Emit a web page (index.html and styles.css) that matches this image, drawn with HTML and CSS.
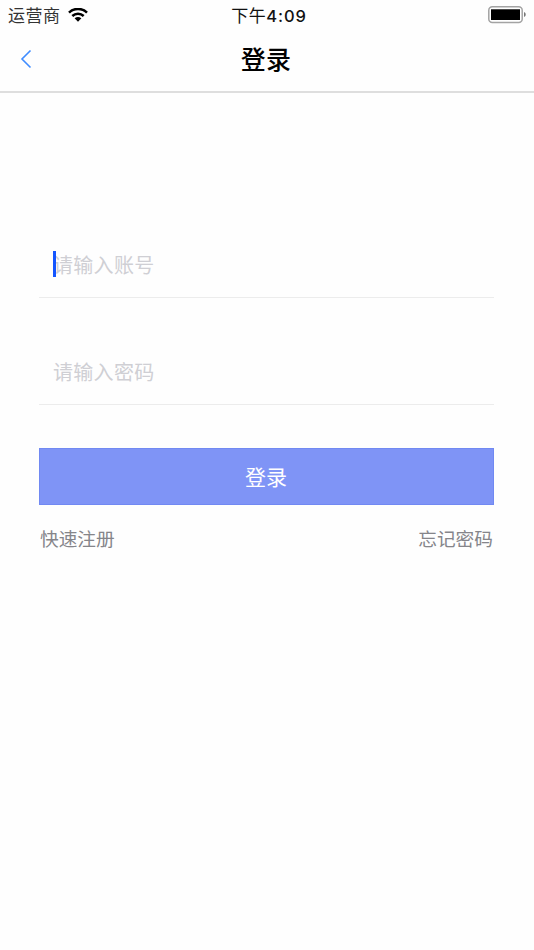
FILE: index.html
```html
<!DOCTYPE html>
<html lang="zh-CN">
<head>
<meta charset="utf-8">
<title>登录</title>
<link rel="stylesheet" href="styles.css">
</head>
<body>
<header class="header">
  <div class="status">
    <div class="carrier">
      <span>运营商</span>
      <svg class="wifi" width="20" height="14" viewBox="0 0 20 14">
        <path d="M1 4.6C6-.3 14-.3 19 4.6M4.3 8C7.5 5 12.500 5 15.700 8" fill="none" stroke="#000" stroke-width="2.500"/>
        <path d="M6.600 10.300Q10 7.600 13.400 10.300L10 13.700Z" fill="#000"/>
      </svg>
    </div>
    <time class="time">下午<span class="digits">4:09</span></time>
    <svg class="battery" width="38" height="18" viewBox="0 0 38 18">
      <rect x=".8" y=".8" width="33.400" height="15.600" rx="3.500" fill="#fff" stroke="#a3a3a3" stroke-width="1.500"/>
      <rect x="3" y="3.300" width="29" height="10.700" fill="#000"/>
      <path d="M36 6C38.300 6.800 38.300 10.200 36 11Z" fill="#777"/>
    </svg>
  </div>
  <nav class="nav">
    <a class="back" href="#" aria-label="返回">
      <svg width="12" height="20" viewBox="0 0 12 20"><path d="M10.500 1.500L2 10L10.500 18.500" fill="none" stroke="#3f8cff" stroke-width="1.600"/></svg>
    </a>
    <h1 class="title">登录</h1>
    <span></span>
  </nav>
</header>
<main class="login">
  <div class="field"><span class="caret"></span><span>请输入账号</span></div>
  <div class="field"><span>请输入密码</span></div>
  <button class="submit" type="button">登录</button>
  <div class="links"><a href="#">快速注册</a><a href="#">忘记密码</a></div>
</main>
</body>
</html>
```
FILE: styles.css
```css
* { box-sizing: border-box; }
html { background: #fefefe; }
body {
  margin: 0;
  height: 950px;
  overflow: hidden;
  font-family: Inter, "Noto Sans CJK SC", sans-serif;
  color: #000;
}
a { color: inherit; text-decoration: none; }
svg { display: block; }
.header { height: 93px; border-bottom: 2px solid #dedede; }
.status {
  display: grid;
  grid-template-columns: 1fr auto 1fr;
  align-items: center;
  height: 30px;
  padding: 0 8px 0 8px;
  font-size: 17px;
  line-height: 28px;
}
.carrier { display: flex; align-items: center; gap: 7px; padding-top: 2px; letter-spacing: .5px; color: #333; }
.wifi { margin-top: -3px; }
.time { padding: 2px 0 0 4px; letter-spacing: .5px; white-space: nowrap; color: #111; }
.digits { font-size: 16.500px; font-weight: 500; letter-spacing: .9px; }
.battery { justify-self: end; }
.nav {
  display: grid;
  grid-template-columns: 1fr auto 1fr;
  align-items: center;
  height: 58px;
  padding: 0 22px 0 20px;
}
.title { margin: 0; padding-top: 2px; font-size: 25px; font-weight: 500; line-height: 56px; letter-spacing: .3px; }
.login { padding: 139px 40px 0 39px; }
.field {
  position: relative;
  height: 66px;
  padding-left: 14px;
  border-bottom: 1px solid #ececec;
  color: #cfcfd4;
  font-size: 20px;
  line-height: 68px;
  letter-spacing: .3px;
}
.field + .field { margin-top: 41px; }
.caret { position: absolute; left: 14px; top: 19px; width: 2.500px; height: 26px; background: #1455ff; }
.submit {
  display: block;
  width: 100%;
  height: 57px;
  margin-top: 43px;
  padding: 2px 1px 0 0;
  border: 1px solid #7189f2;
  background: #7f94f6;
  color: #fff;
  font: inherit;
  font-size: 21px;
  line-height: 53px;
}
.links {
  display: flex;
  justify-content: space-between;
  padding: 0 1px;
  margin-top: 20px;
  font-size: 18.700px;
  line-height: 30px;
  color: #85858a;
}
```
